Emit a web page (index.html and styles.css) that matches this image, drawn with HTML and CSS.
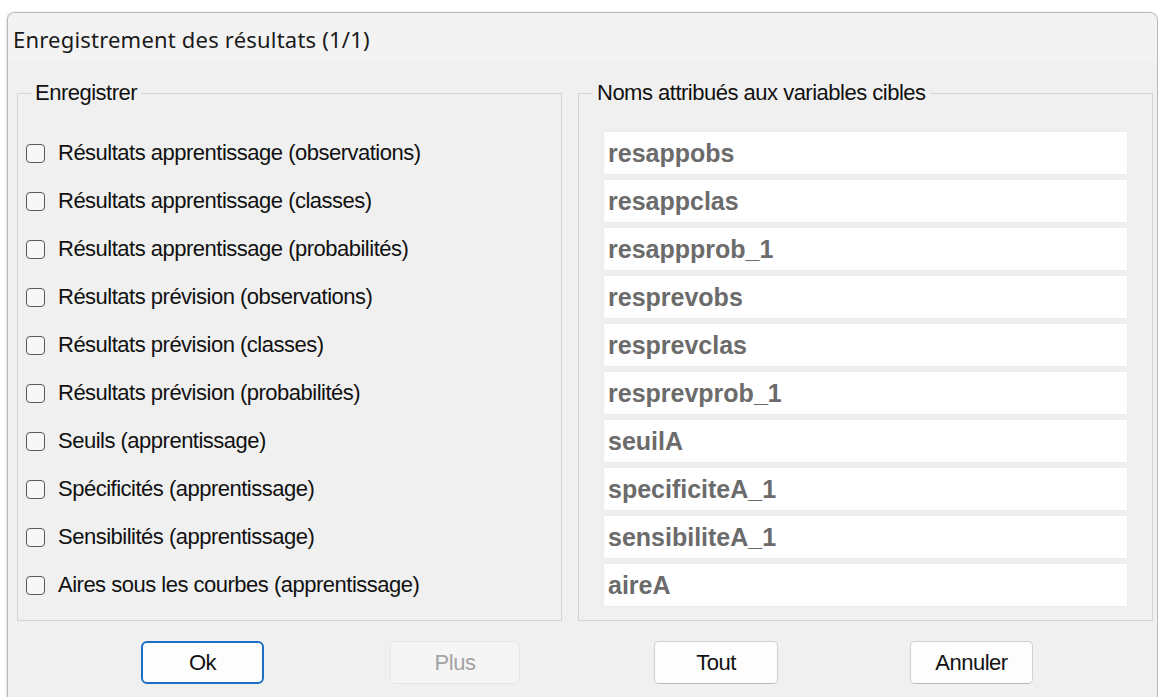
FILE: index.html
```html
<!DOCTYPE html>
<html lang="fr">
<head>
<meta charset="utf-8">
<title>Enregistrement des résultats</title>
<link rel="stylesheet" href="styles.css">
</head>
<body>
<div class="window">
  <div class="titlebar">Enregistrement des résultats (1/1)</div>
  <div class="client">
    <div class="groups">
      <fieldset class="group group-save">
        <legend>Enregistrer</legend>
        <ul class="rows">
          <li class="row"><label class="check"><input type="checkbox"><span>Résultats apprentissage (observations)</span></label></li>
          <li class="row"><label class="check"><input type="checkbox"><span>Résultats apprentissage (classes)</span></label></li>
          <li class="row"><label class="check"><input type="checkbox"><span>Résultats apprentissage (probabilités)</span></label></li>
          <li class="row"><label class="check"><input type="checkbox"><span>Résultats prévision (observations)</span></label></li>
          <li class="row"><label class="check"><input type="checkbox"><span>Résultats prévision (classes)</span></label></li>
          <li class="row"><label class="check"><input type="checkbox"><span>Résultats prévision (probabilités)</span></label></li>
          <li class="row"><label class="check"><input type="checkbox"><span>Seuils (apprentissage)</span></label></li>
          <li class="row"><label class="check"><input type="checkbox"><span>Spécificités (apprentissage)</span></label></li>
          <li class="row"><label class="check"><input type="checkbox"><span>Sensibilités (apprentissage)</span></label></li>
          <li class="row"><label class="check"><input type="checkbox"><span>Aires sous les courbes (apprentissage)</span></label></li>
        </ul>
      </fieldset>
      <fieldset class="group group-names">
        <legend>Noms attribués aux variables cibles</legend>
        <ul class="rows names">
          <li class="row"><input class="name" type="text" value="resappobs"></li>
          <li class="row"><input class="name" type="text" value="resappclas"></li>
          <li class="row"><input class="name" type="text" value="resappprob_1"></li>
          <li class="row"><input class="name" type="text" value="resprevobs"></li>
          <li class="row"><input class="name" type="text" value="resprevclas"></li>
          <li class="row"><input class="name" type="text" value="resprevprob_1"></li>
          <li class="row"><input class="name" type="text" value="seuilA"></li>
          <li class="row"><input class="name" type="text" value="specificiteA_1"></li>
          <li class="row"><input class="name" type="text" value="sensibiliteA_1"></li>
          <li class="row"><input class="name" type="text" value="aireA"></li>
        </ul>
      </fieldset>
    </div>
    <div class="buttons">
      <button class="btn btn-ok" type="button">Ok</button>
      <button class="btn btn-plus" type="button" disabled>Plus</button>
      <button class="btn btn-all" type="button">Tout</button>
      <button class="btn btn-cancel" type="button">Annuler</button>
    </div>
  </div>
</div>
</body>
</html>
```

FILE: styles.css
```css
html, body {
  margin: 0;
  padding: 0;
  background: #ffffff;
  overflow: hidden;
}

body {
  width: 1158px;
  height: 697px;
}

/* dialog frame */
.window {
  box-sizing: border-box;
  margin: 12px 0 0 7px;
  width: 1151px;
  height: 685px;
  border: 1px solid #b9b9b9;
  border-bottom: none;
  border-radius: 8px 8px 0 0;
  background: #f0f0f0;
  overflow: hidden;
  box-shadow: -1px 0 2px rgba(0, 0, 0, 0.12);
}

.titlebar {
  box-sizing: border-box;
  height: 49px;
  padding: 12px 0 0 5px;
  line-height: 28px;
  background: #f3f3f3;
  color: #1a1a1a;
  font-family: "Noto Sans", "Open Sans", sans-serif;
  font-size: 22px;
  letter-spacing: 0.2px;
  white-space: nowrap;
}

.client {
  padding: 19px 0 0 9px;
  font-family: "Liberation Sans", Arial, sans-serif;
  font-size: 22px;
  color: #111111;
}

.groups {
  display: flex;
  gap: 16px;
}

/* group boxes */
.group {
  box-sizing: border-box;
  margin: 0;
  min-width: 0;
  padding: 24px 0 11px 8px;
  border: 1px solid #d3d3d3;
  border-radius: 0;
}

.group legend {
  margin-left: 5px;
  padding: 0 4px;
  line-height: 24px;
  font-size: 22px;
  letter-spacing: -0.5px;
}

.group-save {
  width: 545px;
}

.group-names {
  width: 575px;
}

.group-names legend {
  margin-left: 6px;
}

.rows {
  list-style: none;
  margin: 0;
  padding: 0;
}

.row {
  height: 48px;
  display: flex;
  align-items: center;
}

.names {
  padding-left: 16px;
}

/* checkboxes */
.check {
  display: flex;
  align-items: center;
  gap: 13px;
  white-space: nowrap;
  letter-spacing: -0.5px;
}

.check input {
  appearance: none;
  -webkit-appearance: none;
  box-sizing: border-box;
  margin: 0;
  width: 19px;
  height: 19px;
  border: 1px solid #585858;
  border-radius: 4px;
  background: #f7f7f7;
}

/* target name fields */
.name {
  box-sizing: border-box;
  width: 525px;
  height: 44px;
  margin: 0;
  padding: 0 0 0 4px;
  border: 1px solid #ececec;
  background: #ffffff;
  color: #6b6b6b;
  font-family: "Liberation Sans", Arial, sans-serif;
  font-weight: bold;
  font-size: 25px;
  outline: none;
}

/* command buttons */
.buttons {
  display: flex;
  margin-top: 20px;
  padding-left: 124px;
}

.btn {
  box-sizing: border-box;
  width: 123px;
  height: 43px;
  margin: 0;
  padding: 0;
  border: 1px solid #d0d0d0;
  border-bottom-color: #b8b8b8;
  border-radius: 5px;
  background: #fdfdfd;
  color: #111111;
  font-family: "Liberation Sans", Arial, sans-serif;
  font-size: 22px;
  letter-spacing: -0.5px;
}

.btn-ok {
  border: 2px solid #1a6fc4;
  border-radius: 6px;
}

.btn-plus {
  margin-left: 126px;
  width: 130px;
  background: #f5f5f5;
  border-color: #e6e6e6;
  color: #a3a3a3;
}

.btn-all {
  margin-left: 134px;
  width: 124px;
}

.btn-cancel {
  margin-left: 132px;
}
```
